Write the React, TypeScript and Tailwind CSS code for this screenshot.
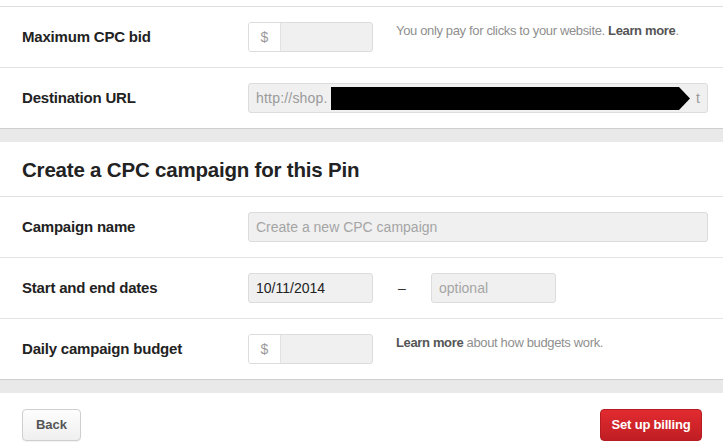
import React from "react";

const font = { fontFamily: '"Liberation Sans", Arial, sans-serif' };

function Row({ label, children, last }: { label: string; children: React.ReactNode; last?: boolean }) {
  return (
    <div className={`flex items-center pl-[22px] pr-[15px] ${last ? "h-[60px]" : "h-[61px] border-b border-[#e3e3e3]"}`}>
      <div className="w-[226px] text-[15px] font-bold tracking-[-0.2px] text-[#222]">{label}</div>
      <div className="flex flex-1 items-center">{children}</div>
    </div>
  );
}

function Money() {
  return (
    <div className="flex h-[30px] w-[125px] overflow-hidden rounded-[3px] border border-[#dcdcdc] bg-[#f0f0f0]">
      <div className="flex w-[32px] items-center justify-center border-r border-[#e2e2e2] bg-white text-[14px] text-[#9a9a9a]">$</div>
      <div className="flex-1" />
    </div>
  );
}

export default function App() {
  return (
    <div className="h-[448px] w-[723px] overflow-hidden bg-white" style={font}>
      <div className="h-[6px]" />
      <div className="border-t border-[#dedede]">
        <Row label="Maximum CPC bid">
          <div className="flex items-center gap-[23px]">
            <Money />
            <div className="-mt-[12px] text-[13px] tracking-[-0.35px] text-[#8f8f8f]">
              You only pay for clicks to your website. <span className="font-bold text-[#555]">Learn more</span>.
            </div>
          </div>
        </Row>
        <Row label="Destination URL" last>
          <div className="relative flex h-[30px] flex-1 items-center overflow-hidden rounded-[3px] border border-[#dcdcdc] bg-[#f0f0f0] pl-[7px] text-[14px] text-[#9a9a9a]">
            <span className="w-[75px] shrink-0 tracking-[0.2px]">http://shop.</span>
            <div className="h-[23px] w-[348px] bg-black" />
            <svg width="11" height="23" viewBox="0 0 11 23" className="shrink-0">
              <polygon points="0,0 11,11.5 0,23" fill="#000" />
            </svg>
            <span className="ml-[6px]">t</span>
          </div>
        </Row>
      </div>
      <div className="h-[14px] border-t border-[#cfcfcf] bg-[#e9e9e9]" />
      <div className="flex h-[55px] items-center border-b border-[#e0e0e0] px-[22px] pt-[2px]">
        <h2 className="text-[20.5px] font-bold tracking-[-0.2px] text-[#222]">Create a CPC campaign for this Pin</h2>
      </div>
      <Row label="Campaign name">
        <div className="flex h-[30px] flex-1 items-center rounded-[3px] border border-[#dcdcdc] bg-[#f0f0f0] pl-[7px] text-[14px] text-[#a5a5a5]">
          Create a new CPC campaign
        </div>
      </Row>
      <Row label="Start and end dates">
        <div className="flex h-[30px] w-[125px] items-center rounded-[3px] border border-[#dcdcdc] bg-[#f0f0f0] pl-[7px] text-[14px] text-[#222]">
          10/11/2014
        </div>
        <div className="w-[58px] text-center text-[14px] text-[#333]">–</div>
        <div className="flex h-[30px] w-[125px] items-center rounded-[3px] border border-[#dcdcdc] bg-[#f0f0f0] pl-[7px] text-[14px] text-[#a5a5a5]">
          optional
        </div>
      </Row>
      <Row label="Daily campaign budget" last>
        <div className="flex items-center gap-[23px]">
          <Money />
          <div className="-mt-[12px] text-[13px] tracking-[-0.35px] text-[#8f8f8f]">
            <span className="font-bold text-[#555]">Learn more</span> about how budgets work.
          </div>
        </div>
      </Row>
      <div className="h-[14px] border-t border-[#cfcfcf] bg-[#e9e9e9]" />
      <div className="flex items-start justify-between pl-[22px] pr-[21px] pt-[16px]">
        <button className="h-[32px] w-[59px] rounded-[4px] border border-[#cfcfcf] bg-gradient-to-b from-[#fefefe] to-[#efefef] text-[13px] font-bold text-[#555] shadow-[0_1px_1px_rgba(0,0,0,0.06)]">
          Back
        </button>
        <button className="h-[32px] w-[102px] rounded-[4px] border border-[#b51d22] bg-gradient-to-b from-[#e22b30] to-[#bf1e24] text-[13px] font-bold tracking-[-0.2px] text-white">
          Set up billing
        </button>
      </div>
    </div>
  );
}
